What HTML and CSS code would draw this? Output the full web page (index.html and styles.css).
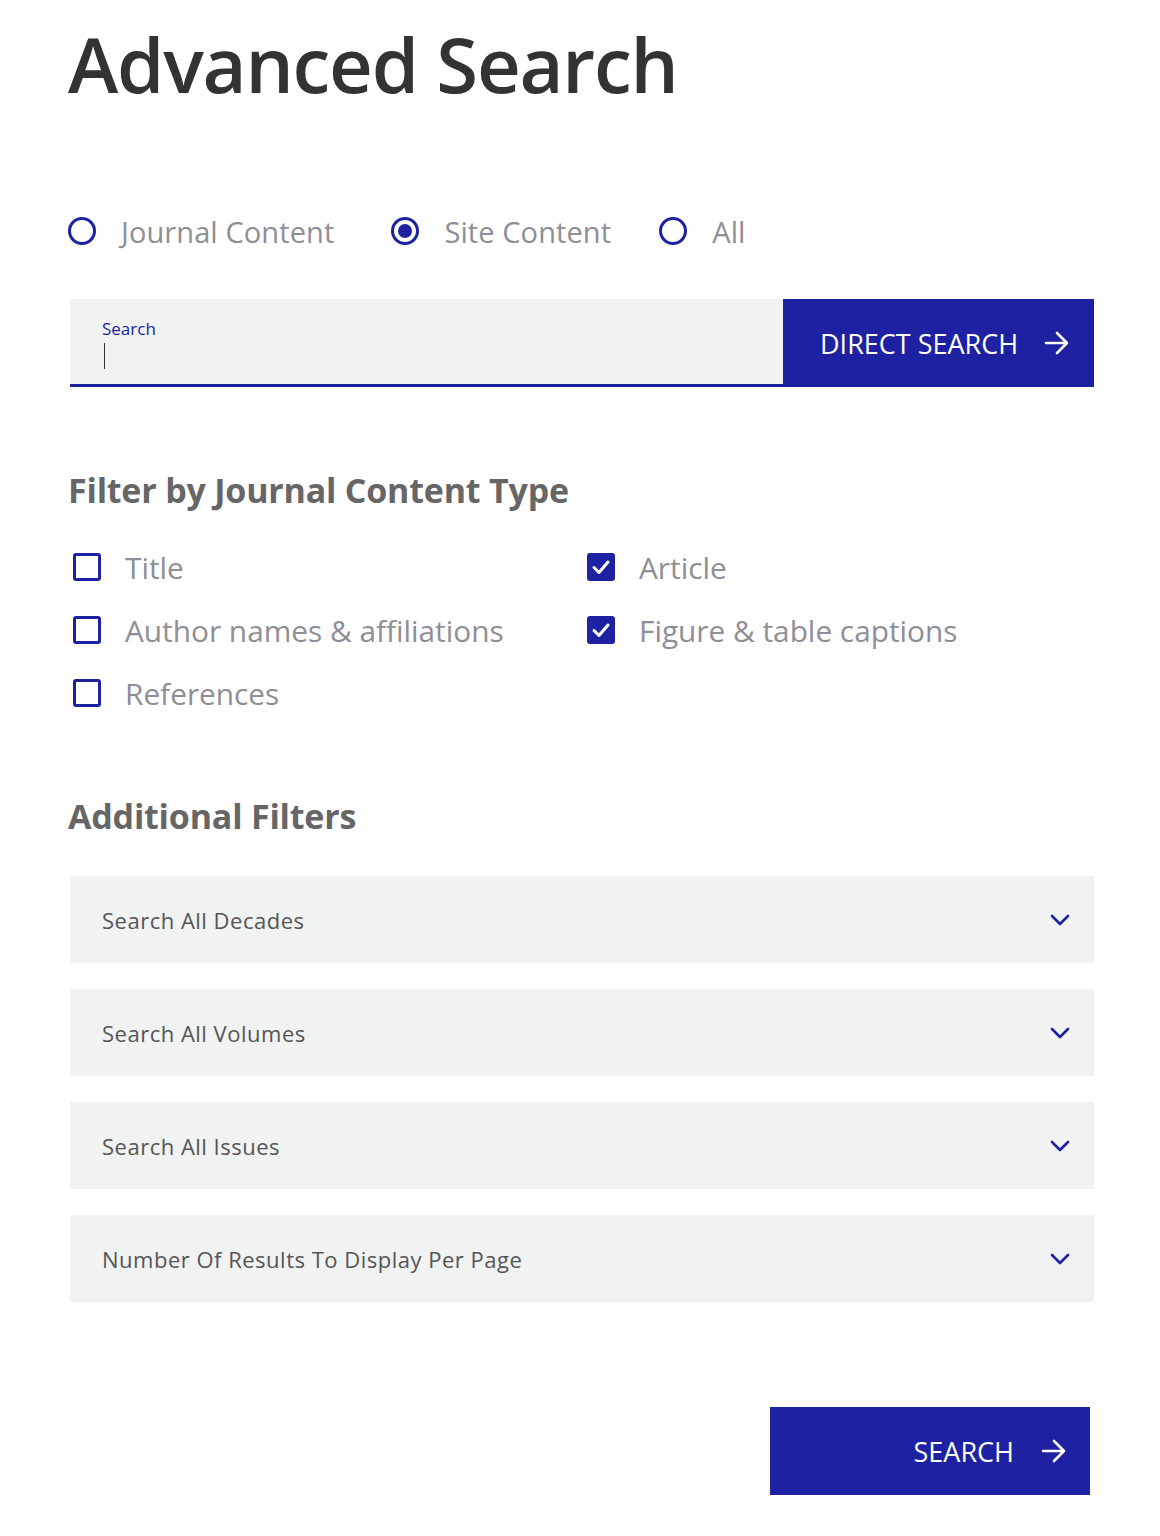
FILE: index.html
```html
<!DOCTYPE html>
<html lang="en">
<head>
<meta charset="utf-8">
<title>Advanced Search</title>
<link rel="stylesheet" href="styles.css">
</head>
<body>
<main class="page">
  <h1 class="title">Advanced Search</h1>

  <div class="radios">
    <label class="radio"><span class="radio-dot"></span><span class="radio-text">Journal Content</span></label>
    <label class="radio checked"><span class="radio-dot"></span><span class="radio-text">Site Content</span></label>
    <label class="radio"><span class="radio-dot"></span><span class="radio-text">All</span></label>
  </div>

  <div class="search-row">
    <div class="search-field">
      <span class="search-label">Search</span>
      <span class="caret"></span>
    </div>
    <button class="btn btn-direct">
      <span>DIRECT SEARCH</span>
      <svg class="arrow" viewBox="0 0 26 24" width="26" height="24"><path d="M2 12H23M13 2L23 12L13 22" fill="none" stroke="#fff" stroke-width="2.6" stroke-linecap="round" stroke-linejoin="round"/></svg>
    </button>
  </div>

  <h2 class="section-title first">Filter by Journal Content Type</h2>
  <div class="checks">
    <div class="check-col">
      <label class="check"><span class="box"></span><span class="check-text">Title</span></label>
      <label class="check"><span class="box"></span><span class="check-text">Author names &amp; affiliations</span></label>
      <label class="check"><span class="box"></span><span class="check-text">References</span></label>
    </div>
    <div class="check-col">
      <label class="check"><span class="box on"><svg viewBox="0 0 28 28" width="28" height="28"><path d="M7 14.5L12 19.5L21 9" fill="none" stroke="#fff" stroke-width="3" stroke-linecap="round" stroke-linejoin="round"/></svg></span><span class="check-text">Article</span></label>
      <label class="check"><span class="box on"><svg viewBox="0 0 28 28" width="28" height="28"><path d="M7 14.5L12 19.5L21 9" fill="none" stroke="#fff" stroke-width="3" stroke-linecap="round" stroke-linejoin="round"/></svg></span><span class="check-text">Figure &amp; table captions</span></label>
    </div>
  </div>

  <h2 class="section-title second">Additional Filters</h2>
  <div class="selects">
    <div class="select"><span>Search All Decades</span><svg class="chev" viewBox="0 0 20 12" width="20" height="12"><path d="M2 2L10 10L18 2" fill="none" stroke="#1e22a2" stroke-width="2.6" stroke-linecap="round" stroke-linejoin="round"/></svg></div>
    <div class="select"><span>Search All Volumes</span><svg class="chev" viewBox="0 0 20 12" width="20" height="12"><path d="M2 2L10 10L18 2" fill="none" stroke="#1e22a2" stroke-width="2.6" stroke-linecap="round" stroke-linejoin="round"/></svg></div>
    <div class="select"><span>Search All Issues</span><svg class="chev" viewBox="0 0 20 12" width="20" height="12"><path d="M2 2L10 10L18 2" fill="none" stroke="#1e22a2" stroke-width="2.6" stroke-linecap="round" stroke-linejoin="round"/></svg></div>
    <div class="select"><span>Number Of Results To Display Per Page</span><svg class="chev" viewBox="0 0 20 12" width="20" height="12"><path d="M2 2L10 10L18 2" fill="none" stroke="#1e22a2" stroke-width="2.6" stroke-linecap="round" stroke-linejoin="round"/></svg></div>
  </div>

  <div class="actions">
    <button class="btn btn-search">
      <span>SEARCH</span>
      <svg class="arrow" viewBox="0 0 26 24" width="26" height="24"><path d="M2 12H23M13 2L23 12L13 22" fill="none" stroke="#fff" stroke-width="2.6" stroke-linecap="round" stroke-linejoin="round"/></svg>
    </button>
  </div>
</main>
</body>
</html>
```

FILE: styles.css
```css
* { box-sizing: border-box; }
html, body { margin: 0; padding: 0; background: #fff; }
body { font-family: "Open Sans", "Noto Sans", sans-serif; }

.page {
  width: 1160px;
  padding: 0 66px 0 70px;
}

.title {
  margin: 0;
  padding-top: 16px;
  margin-left: -2px;
  font-size: 76px;
  line-height: 96px;
  font-weight: 600;
  color: #333;
  letter-spacing: -1.2px;
}

.radios {
  display: flex;
  align-items: center;
  margin-top: 99px;
  margin-left: -2px;
  height: 40px;
}
.radio {
  display: flex;
  align-items: center;
  margin-right: 57px;
}
.radio.checked { margin-right: 48px; }
.radio-dot {
  width: 28px;
  height: 28px;
  border: 3px solid #1e22a2;
  border-radius: 50%;
  position: relative;
  flex: none;
}
.radio.checked .radio-dot::after {
  content: "";
  position: absolute;
  left: 4px; top: 4px;
  width: 14px; height: 14px;
  border-radius: 50%;
  background: #1e22a2;
}
.radio-text {
  margin-left: 25px;
  font-size: 29px;
  color: #8e8e96;
  letter-spacing: 0.1px;
}

.search-row {
  display: flex;
  margin-top: 48px;
  height: 88px;
}
.search-field {
  flex: 1;
  background: #f1f2f2;
  border-bottom: 3px solid #1e22a2;
  padding: 18px 32px 0;
  display: flex;
  flex-direction: column;
}
.search-label {
  font-size: 17px;
  line-height: 24px;
  color: #1e22a2;
}
.caret {
  width: 1px;
  height: 26px;
  margin-top: 2px;
  margin-left: 2px;
  background: #333;
}
.btn {
  border: 0;
  background: #1e22a2;
  color: #fff;
  font-family: "Open Sans", "Noto Sans", sans-serif;
  font-size: 27px;
  display: flex;
  align-items: center;
  cursor: pointer;
}
.btn-direct {
  width: 311px;
  padding: 0 24px 0 37px;
  justify-content: space-between;
  letter-spacing: 0;
}
.arrow { flex: none; }

.section-title {
  margin: 0;
  font-size: 34px;
  line-height: 48px;
  font-weight: 700;
  color: #666;
  margin-left: -2px;
  letter-spacing: -0.2px;
}
.section-title.first { margin-top: 79px; }
.section-title.second { margin-top: 79px; }

.checks {
  display: grid;
  grid-template-columns: 514px 1fr;
  margin-top: 33px;
}
.check-col {
  display: flex;
  flex-direction: column;
  gap: 23px;
}
.check {
  display: flex;
  align-items: center;
  height: 40px;
}
.box {
  width: 28px;
  height: 28px;
  margin-left: 3px;
  border: 3px solid #1e22a2;
  border-radius: 3px;
  flex: none;
  display: flex;
}
.box.on {
  background: #1e22a2;
}
.box.on svg { margin: -3px; }
.check-text {
  margin-left: 24px;
  font-size: 29.8px;
  color: #8e8e96;
}

.selects {
  display: flex;
  flex-direction: column;
  gap: 26px;
  margin-top: 36px;
}
.select {
  height: 87px;
  background: #f1f2f2;
  display: flex;
  align-items: center;
  justify-content: space-between;
  padding: 0 24px 0 32px;
  font-size: 22px;
  color: #555;
  letter-spacing: 0.5px;
}

.actions {
  display: flex;
  justify-content: flex-end;
  margin-top: 105px;
  padding-right: 4px;
}
.btn-search {
  width: 320px;
  height: 88px;
  justify-content: flex-end;
  padding: 0 23px 0 0;
  gap: 27px;
}
```
